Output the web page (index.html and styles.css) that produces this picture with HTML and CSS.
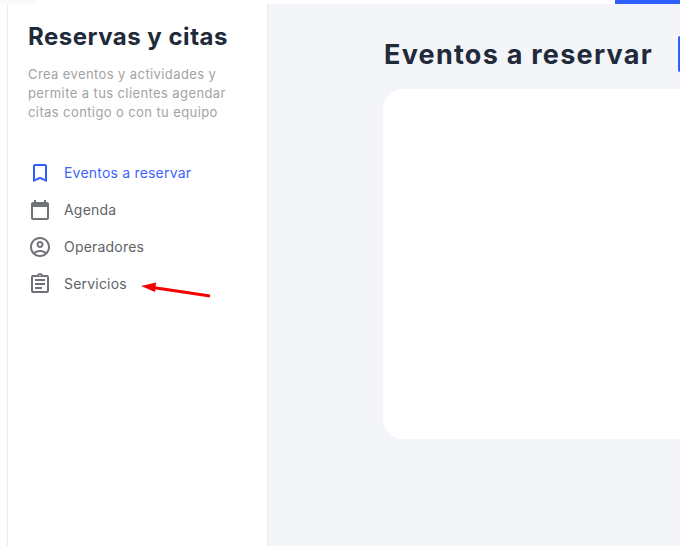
FILE: index.html
```html
<!DOCTYPE html>
<html>
<head>
    <title>Reservas y citas</title>
    <link rel="stylesheet" href="styles.css">
</head>
<body>
    <div class="topbar">
        <div class="topbar-tab"></div>
        <div class="topbar-mark"></div>
    </div>
    <div class="layout">
        <aside class="sidebar">
            <h2 class="sidebar-title">Reservas y citas</h2>
            <p class="sidebar-text">Crea eventos y actividades y permite a tus clientes agendar citas contigo o con tu equipo</p>
            <nav class="menu">
                <a class="menu-item active">
                    <svg class="menu-icon" viewBox="0 0 24 24"><path fill="currentColor" d="M17 3H7c-1.1 0-2 .9-2 2v16l7-3 7 3V5c0-1.1-.9-2-2-2zm0 15-5-2.18L7 18V5h10v13z"/></svg>
                    <span>Eventos a reservar</span>
                </a>
                <a class="menu-item">
                    <svg class="menu-icon" viewBox="0 0 24 24"><path fill="currentColor" d="M19 4h-1V2h-2v2H8V2H6v2H5c-1.1 0-2 .9-2 2v14c0 1.1.9 2 2 2h14c1.1 0 2-.9 2-2V6c0-1.100-.9-2-2-2zm0 16H5V9h14v11z"/></svg>
                    <span>Agenda</span>
                </a>
                <a class="menu-item">
                    <svg class="menu-icon" viewBox="0 0 24 24"><path fill="currentColor" d="M12 2C6.480 2 2 6.480 2 12s4.480 10 10 10 10-4.480 10-10S17.520 2 12 2zM7.350 18.500C8.660 17.560 10.260 17 12 17s3.340.56 4.650 1.500C15.340 19.440 13.740 20 12 20s-3.340-.56-4.650-1.500zm10.790-1.380C16.450 15.800 14.320 15 12 15s-4.450.8-6.140 2.120C4.700 15.730 4 13.950 4 12c0-4.420 3.580-8 8-8s8 3.580 8 8c0 1.950-.7 3.730-1.860 5.120zM12 6c-1.930 0-3.500 1.570-3.500 3.500S10.070 13 12 13s3.500-1.570 3.500-3.500S13.930 6 12 6zm0 5c-.83 0-1.500-.67-1.500-1.500S11.170 8 12 8s1.500.67 1.500 1.500S12.830 11 12 11z"/></svg>
                    <span>Operadores</span>
                </a>
                <a class="menu-item">
                    <svg class="menu-icon" viewBox="0 0 24 24"><path fill="currentColor" d="M7 15h7v2H7zm0-4h10v2H7zm0-4h10v2H7zm12-4h-4.180C14.400 1.840 13.300 1 12 1s-2.400.84-2.820 2H5c-.14 0-.27.01-.4.04-.39.08-.74.28-1.010.55-.18.18-.33.4-.43.64-.1.23-.16.49-.16.77v14c0 .27.060.54.16.78.1.24.25.450.43.64.27.27.62.470 1.010.55.130.020.260.030.400.030h14c1.100 0 2-.9 2-2V5c0-1.100-.9-2-2-2zm-7-.25c.41 0 .75.340.75.750s-.34.750-.75.750-.75-.340-.75-.750.340-.750.750-.750zM19 19H5V5h14v14z"/></svg>
                    <span>Servicios</span>
                </a>
            </nav>
            <svg class="arrow" viewBox="0 0 70 20"><path d="M69 16 L12 7.500" stroke="#f50000" stroke-width="3" fill="none"/><path d="M0 6 L15 2.500 L14 12 Z" fill="#f50000"/></svg>
        </aside>
        <main class="content">
            <div class="content-head">
                <h1 class="content-title">Eventos a reservar</h1>
                <div class="new-button"></div>
            </div>
            <div class="card"></div>
        </main>
    </div>
</body>
</html>
```

FILE: styles.css
```css
* {
    box-sizing: border-box;
}
html, body {
    height: 100%;
}
body {
    margin: 0;
    background-color: #fff;
    font-family: Inter, "Noto Sans", sans-serif;
    overflow: hidden;
    display: flex;
    flex-direction: column;
}
.topbar {
    height: 4px;
    flex-shrink: 0;
    display: flex;
    justify-content: space-between;
}
.topbar-tab {
    width: 37px;
    height: 4px;
    background-color: #fafafa;
}
.topbar-mark {
    width: 65px;
    height: 4px;
    background-color: #2f5fff;
}
.layout {
    flex: 1;
    display: flex;
    padding-left: 7px;
}
.sidebar {
    position: relative;
    width: 261px;
    padding: 19px 20px 0 20px;
    border-left: 1px solid #ececec;
    border-right: 1px solid #e8e8ec;
}
.sidebar-title {
    margin: 0;
    font-size: 24px;
    line-height: 28px;
    font-weight: 700;
    color: #1f2a3a;
    letter-spacing: 0.5px;
}
.sidebar-text {
    margin: 14px 0 0 0;
    font-size: 13px;
    line-height: 19px;
    color: #a3a3a3;
    letter-spacing: 0.4px;
}
.menu {
    margin-top: 32px;
    display: flex;
    flex-direction: column;
}
.menu-item {
    display: flex;
    align-items: center;
    gap: 12px;
    height: 37px;
    font-size: 14px;
    letter-spacing: 0.2px;
    color: #5f6368;
}
.menu-item.active {
    color: #3f63ff;
}
.menu-icon {
    width: 24px;
    height: 24px;
    color: #6f7378;
}
.menu-item.active .menu-icon {
    color: #2f5fff;
}
.arrow {
    position: absolute;
    left: 133px;
    top: 276px;
    width: 70px;
    height: 20px;
}
.content {
    flex: 1;
    padding: 30px 0 0 115px;
    background-color: #f4f5f9;
    min-width: 0;
}
.content-head {
    display: flex;
    align-items: center;
    gap: 25px;
    height: 40px;
}
.content-title {
    margin: 0 0 0 1px;
    font-size: 27px;
    font-weight: 700;
    letter-spacing: 1.25px;
    color: #1f2a3a;
    white-space: nowrap;
}
.new-button {
    flex: 1;
    height: 36px;
    border-radius: 8px 0 0 8px;
    background-color: #2f5fff;
}
.card {
    margin-top: 15px;
    height: 350px;
    background-color: #fff;
    border-radius: 20px 0 0 20px;
}
```
